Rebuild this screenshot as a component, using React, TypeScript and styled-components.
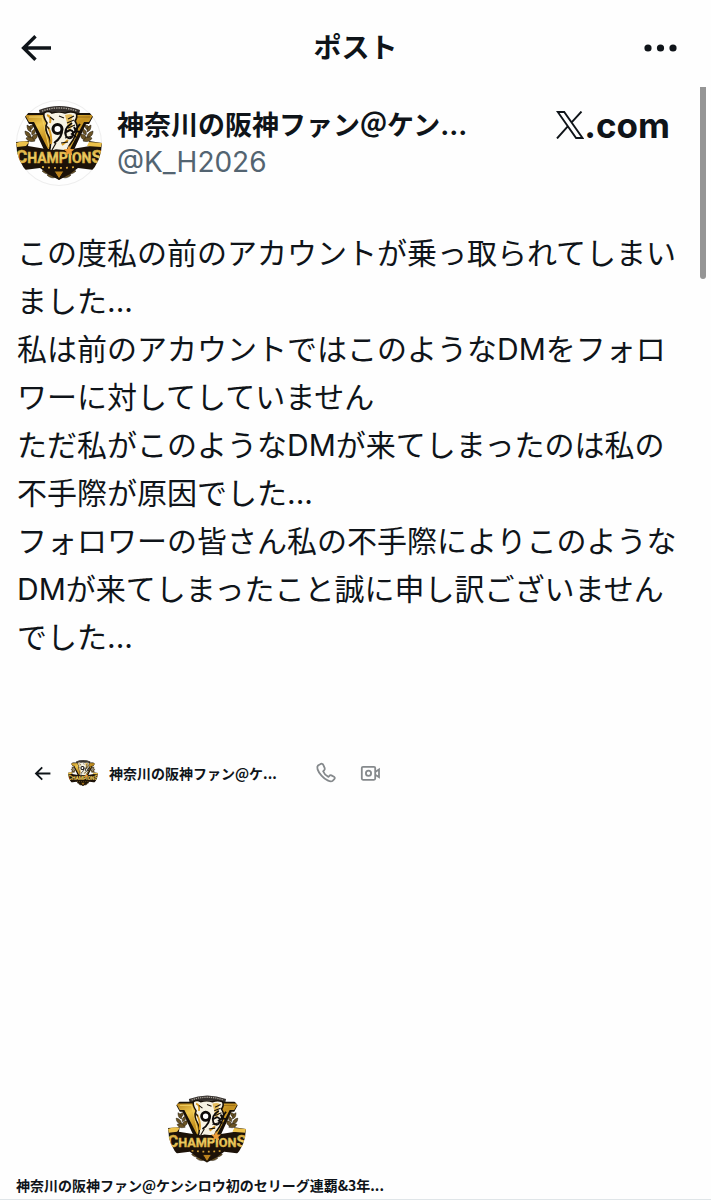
import React from "react";
import styled, { createGlobalStyle } from "styled-components";

const GlobalStyle = createGlobalStyle`
  *, *::before, *::after { box-sizing: border-box; }
  body {
    margin: 0;
    background: #fefefe;
    color: #0f1419;
    font-family: Inter, "Noto Sans CJK JP", sans-serif;
  }
  h1, h2, p { margin: 0; }
`;

const Page = styled.div`
  position: relative;
  overflow: hidden;
`;

const TopBar = styled.header`
  display: grid;
  grid-template-columns: 1fr auto 1fr;
  align-items: center;
  height: 96px;
  padding: 0 18px;
`;

const Title = styled.h1`
  font-size: 28px;
  line-height: 40px;
  font-weight: 700;
`;

const IconButton = styled.button<{ $end?: boolean }>`
  display: flex;
  padding: 0 ${(p) => (p.$end ? "14px" : "0")} 0 0;
  border: 0;
  background: none;
  color: inherit;
  cursor: pointer;
  justify-self: ${(p) => (p.$end ? "end" : "start")};
`;

const ScrollThumb = styled.div`
  position: absolute;
  top: 87px;
  right: 5px;
  width: 6px;
  height: 192px;
  border-radius: 0 0 3px 3px;
  background: #959595;
`;

const Author = styled.section`
  display: flex;
  align-items: flex-start;
  padding: 4px 41px 0 16px;
`;

const Names = styled.div`
  flex: 1;
  min-width: 0;
  padding: 8px 0 0 15px;
`;

const DisplayName = styled.h2`
  font-size: 27px;
  line-height: 36px;
  font-weight: 700;
  white-space: nowrap;
`;

const Handle = styled.a`
  display: block;
  font-size: 28px;
  line-height: 36px;
  color: #536471;
  text-decoration: none;
`;

const Source = styled.a`
  display: flex;
  align-items: center;
  padding-top: 5px;
  font-size: 35px;
  line-height: 40px;
  font-weight: 700;
  color: inherit;
  text-decoration: none;
`;

const Body = styled.main`
  padding: 43px 16px 0 17px;
  font-size: 30px;
  line-height: 48px;
`;

const Line = styled.p`
  white-space: nowrap;
`;

const ChatBar = styled.section`
  display: flex;
  align-items: center;
  margin-top: 97px;
  padding-left: 33px;
`;

const ChatName = styled.p<{ $wide?: boolean }>`
  width: ${(p) => (p.$wide ? "auto" : "217px")};
  padding-left: ${(p) => (p.$wide ? "16px" : "11px")};
  font-family: "Noto Sans CJK JP", sans-serif;
  font-size: 14px;
  line-height: 24px;
  font-weight: 700;
  white-space: nowrap;
`;

const ChatActions = styled.div`
  display: flex;
  gap: 22px;
  color: #85898c;
`;

const ChatAvatar = styled.div`
  padding-left: 16px;
`;

const Profile = styled.section`
  padding: 302px 0 2px;
  border-bottom: 1px solid #dfe5e8;
`;

const ProfileAvatar = styled.div`
  display: flex;
  padding: 0 0 5px 168px;
`;

const Round = styled.div<{ $size: number; $ring?: boolean }>`
  flex: none;
  width: ${(p) => p.$size}px;
  height: ${(p) => p.$size}px;
  border-radius: 50%;
  overflow: hidden;
  box-shadow: ${(p) => (p.$ring ? "inset 0 0 0 1px #eeeeee" : "none")};

  svg { display: block; width: 100%; height: 100%; }
`;

function Leaves({ flip }: { flip?: boolean }) {
  return (
    <g transform={flip ? "translate(86 0) scale(-1 1)" : undefined} fill="#6b5426" stroke="#191207" strokeWidth="0.5">
      <path d="M17 25c-4 0-5 3-4 5 3 0 4-2 4-5Z" />
      <path d="M11 25c0 4 1 6 4 7 0-3-1-6-4-7Z" />
      <path d="M19 29c-3 1-4 3-3 6 3-1 4-3 3-6Z" />
      <path d="M9 31c0 4 2 6 6 7 0-4-2-6-6-7Z" />
      <path d="M21 34c-4 0-6 3-5 6 4 0 6-3 5-6Z" />
      <path d="M10 38c2 4 5 4 9 3-2-4-5-5-9-3Z" />
      <path d="M26 71c4-2 8-2 11 2-4 2-8 1-11-2Z" />
      <path d="M31 75c3-2 7-2 10 1-3 3-7 2-10-1Z" />
    </g>
  );
}

function Emblem({ id }: { id: string }) {
  const gold = `gold-${id}`;
  const letterGold = `letter-gold-${id}`;
  return (
    <svg viewBox="0 0 86 86" role="img" aria-label="CHAMPIONS">
      <defs>
        <linearGradient id={gold} x1="0" y1="0" x2="1" y2="1">
          <stop offset="0" stopColor="#b9851c" />
          <stop offset="0.25" stopColor="#edc54c" />
          <stop offset="0.5" stopColor="#c4901f" />
          <stop offset="1" stopColor="#e8bd42" />
        </linearGradient>
        <linearGradient id={letterGold} x1="0" y1="0" x2="0" y2="1">
          <stop offset="0" stopColor="#c8962a" />
          <stop offset="0.5" stopColor="#f0cf63" />
          <stop offset="1" stopColor="#cf9a2b" />
        </linearGradient>
      </defs>
      <path d="M23 10Q43 2 64 10l-1 5Q43 8 24 15Z" fill="#35302d" />
      <path d="M26 11Q43 5 61 11" fill="none" stroke="#a8a298" strokeWidth="1.4" strokeDasharray="1.4 1" />
      <path d="M7 13h72l-6 11h-3L57 52 43 80 29 52 16 24h-3Z" fill="#171008" />
      <path d="M9 15h68l-4 7h-5L54 49H32L18 22h-5Z" fill={`url(#${gold})`} />
      <path d="M13 17h13l2 8 5 22" fill="none" stroke="#f3d368" strokeWidth="1" />
      <path d="M74 17H61l-2 8-6 22" fill="none" stroke="#9a6c16" strokeWidth="1" />
      <path d="M28 13q4-3 8 0 7-2 13 0 6-2 11 0 2 4-1 8 4 6 1 12-2 7-7 13l-2 5-11-1-7 2q3-9 0-15-5-8-2-14-4-6-3-10Z" fill="#f7f3e4" stroke="#171008" strokeWidth="1.6" />
      <path d="M49 15q7-2 8 1-3 6 0 10l-5 6q0-8-3-17Z" fill="#e6bd5c" />
      <path d="M31 15c3 1 4 4 3 8m-2 4c2 4 4 10 3 17m11 1l6-5" fill="none" stroke="#d69a22" strokeWidth="2" />
      <path d="M34 17l4 3m5-4l5 2m-18 7l3 4m25-13l-6 3m6 1l-7 3m8 2l-7 3m4 8l-7 2m3 4l-7 1M36 50l4-7" fill="none" stroke="#171008" strokeWidth="1.2" />
      <ellipse cx="41.500" cy="29" rx="4.500" ry="4.500" fill="#fff" stroke="#0e0b09" strokeWidth="3" />
      <path d="M46 28q1 9-8 15m18-20q-9 6-6 13 3 4 6 1 3-6-2-7l-4 2M58 27l2 4-4 3 4 3M64 24l-5 7 5 1" fill="none" stroke="#0e0b09" strokeWidth="2" />
      <Leaves />
      <Leaves flip />
      <path d="M0 42l13-1-1 5 12 2 12 2h14l12-2 12-2-1-5 13 2-1 17-4 5-3 5-16-2-8 6-11 6-11-6-8-6-16 2-7-14Z" fill="#1c1208" />
      <text
        x="43"
        y="63"
        textAnchor="middle"
        fontFamily="Roboto, sans-serif"
        fontWeight="700"
        fontSize="14"
        fill={`url(#${letterGold})`}
        stroke={`url(#${letterGold})`}
        strokeWidth="0.4"
      >
        <tspan fontSize="18">C</tspan>HAMPION<tspan fontSize="18">S</tspan>
      </text>
      <path d="M0 43q7-3 13-1l-3 4-9 1Zm86 0-13-1-2 4 14 1Z" fill="#ecc14a" />
      <path d="M53 45l1.500 4 4 .2-3 2.600 1 4-3.500-2.300-3.500 2.300 1-4-3-2.600 4-.2Z" fill="#ed9c36" />
      <path d="M26 67q17 2 34 0" fill="none" stroke="#d2a037" strokeWidth="1.800" strokeDasharray="2 4" />
      <path d="M38 71h10l-5 8Z" fill="#bd831d" stroke="#171008" />
    </svg>
  );
}

function Avatar({ size, id, ring }: { size: number; id: string; ring?: boolean }) {
  return (
    <Round $size={size} $ring={ring}>
      <Emblem id={id} />
    </Round>
  );
}

function BackArrow({ size }: { size: number }) {
  return (
    <svg width={size} height={size} viewBox="0 0 36 36" fill="none" stroke="currentColor" strokeWidth="3.4" aria-hidden="true">
      <path d="M17.500 6.200 5.600 18l11.900 11.800M5.600 18H33" />
    </svg>
  );
}

const post = [
  "この度私の前のアカウントが乗っ取られてしまい",
  "ました...",
  "私は前のアカウントではこのようなDMをフォロ",
  "ワーに対してしていません",
  "ただ私がこのようなDMが来てしまったのは私の",
  "不手際が原因でした...",
  "フォロワーの皆さん私の不手際によりこのような",
  "DMが来てしまったこと誠に申し訳ございません",
  "でした...",
];

export default function App() {
  return (
    <>
      <GlobalStyle />
      <Page>
        <TopBar>
          <IconButton aria-label="戻る">
            <BackArrow size={36} />
          </IconButton>
          <Title>ポスト</Title>
          <IconButton $end aria-label="その他">
            <svg width="36" height="36" viewBox="0 0 36 36" fill="currentColor" aria-hidden="true">
              <circle cx="5" cy="18" r="3.600" />
              <circle cx="17.500" cy="18" r="3.600" />
              <circle cx="30" cy="18" r="3.600" />
            </svg>
          </IconButton>
        </TopBar>
        <ScrollThumb />
        <Author>
          <Avatar size={86} id="author" ring />
          <Names>
            <DisplayName>神奈川の阪神ファン＠ケン...</DisplayName>
            <Handle href="#profile">@K_H2026</Handle>
          </Names>
          <Source href="#source">
            <svg width="28" height="28" viewBox="0 0 28 28" fill="none" stroke="currentColor" aria-label="X">
              <path d="M1.800 1h6.400L26.500 27h-6.400ZM1 27.500l11.200-12.700M15.400 11.600 25.500.5" strokeWidth="1.900" />
            </svg>
            .com
          </Source>
        </Author>
        <Body>
          {post.map((line) => (
            <Line key={line}>{line}</Line>
          ))}
        </Body>
        <ChatBar>
          <IconButton aria-label="チャットを戻る">
            <BackArrow size={19} />
          </IconButton>
          <ChatAvatar>
            <Avatar size={30} id="chat" />
          </ChatAvatar>
          <ChatName>神奈川の阪神ファン@ケ...</ChatName>
          <ChatActions>
            <IconButton aria-label="音声通話">
              <svg width="22" height="22" viewBox="0 0 22 22" fill="none" stroke="currentColor" strokeWidth="1.800" strokeLinejoin="round" aria-hidden="true">
                <path d="M5.200 2.200 3 3.500C1.500 5 2.300 9 6.500 13.600c4 4.500 8.700 6.500 11 5.400l2-2.200c.6-.8.3-1.500-.5-2l-2.600-1.400c-.8-.4-1.500-.2-2 .4l-1 1.100c-1.800-.8-4.500-3.500-5.300-5.600l1.200-1.200c.6-.6.7-1.200.4-2L8.300 2.900c-.5-1.300-1.900-1.500-3.100-.7Z" />
              </svg>
            </IconButton>
            <IconButton aria-label="ビデオ通話">
              <svg width="22" height="22" viewBox="0 0 22 22" fill="none" stroke="currentColor" strokeWidth="1.800" aria-hidden="true">
                <rect x="2.800" y="4.800" width="13.400" height="13" rx="1.200" />
                <circle cx="9.500" cy="11.300" r="2.600" />
                <path d="M16.200 10 20 7.500v7.600L16.200 12.700" />
              </svg>
            </IconButton>
          </ChatActions>
        </ChatBar>
        <Profile>
          <ProfileAvatar>
            <Avatar size={78} id="profile" />
          </ProfileAvatar>
          <ChatName $wide>神奈川の阪神ファン@ケンシロウ初のセリーグ連覇&3年...</ChatName>
        </Profile>
      </Page>
    </>
  );
}
